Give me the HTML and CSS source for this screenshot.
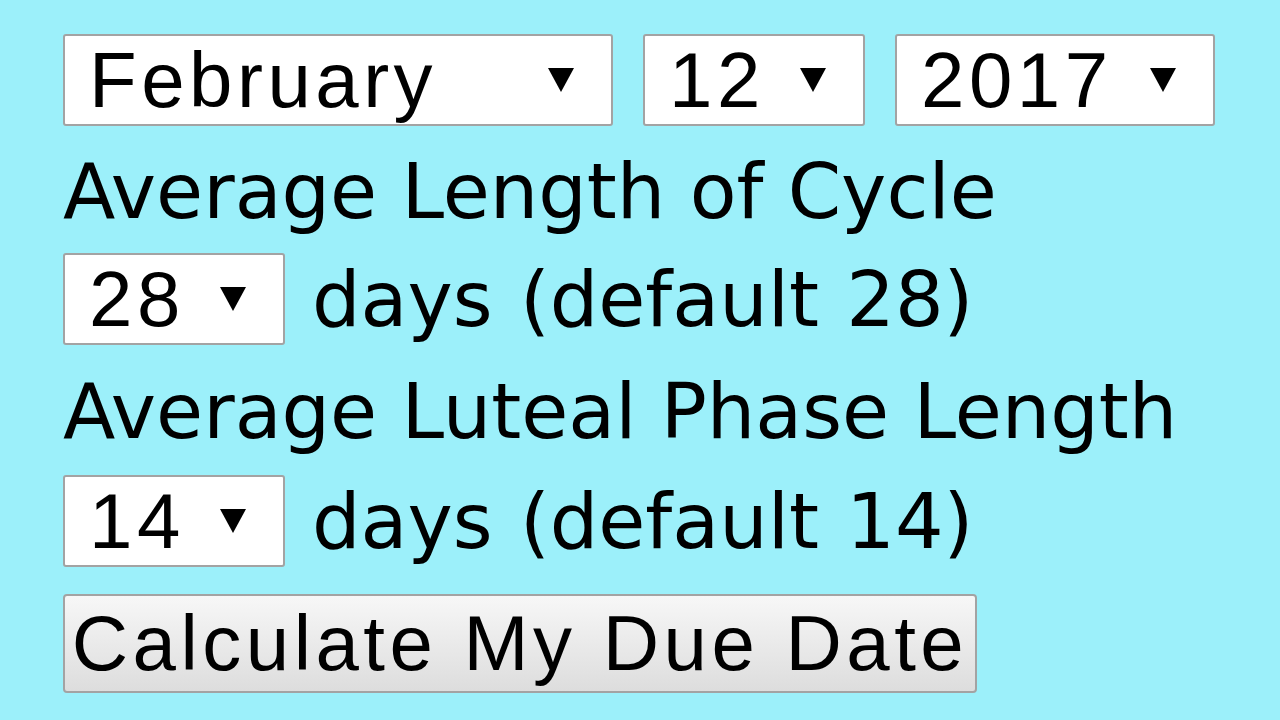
FILE: index.html
```html
<!DOCTYPE html>
<html lang="en">
<head>
  <meta charset="UTF-8">
  <meta name="viewport" content="width=device-width, initial-scale=1.0">
  <title>Due Date Calculator</title>
  <link rel="stylesheet" href="styles.css">
</head>
<body>
  <form class="due-form">
    <div class="date-row">
      <select class="picker picker-month">
        <option>January</option>
        <option selected>February</option>
        <option>March</option>
      </select>
      <select class="picker picker-small">
        <option>11</option>
        <option selected>12</option>
        <option>13</option>
      </select>
      <select class="picker picker-year">
        <option>2016</option>
        <option selected>2017</option>
        <option>2018</option>
      </select>
    </div>

    <div class="field-label label-cycle">Average Length of Cycle</div>
    <div class="choice-row row-cycle">
      <select class="picker picker-small">
        <option>27</option>
        <option selected>28</option>
        <option>29</option>
      </select>
      <span class="field-note">days (default 28)</span>
    </div>

    <div class="field-label label-luteal">Average Luteal Phase Length</div>
    <div class="choice-row row-luteal">
      <select class="picker picker-small">
        <option>13</option>
        <option selected>14</option>
        <option>15</option>
      </select>
      <span class="field-note">days (default 14)</span>
    </div>

    <button type="button" class="calc-button">Calculate My Due Date</button>
  </form>
</body>
</html>
```

FILE: styles.css
```css
/* Basic styling */
body {
  margin: 0;
  padding: 0;
  background-color: #9cf0fa; /* light cyan page */
  color: #000;
}

.due-form {
  padding: 34px 0 0 63px;
}

.date-row {
  display: flex;
  gap: 30px;
  margin-bottom: 20px;
}

.picker {
  -webkit-appearance: none;
  appearance: none;
  box-sizing: border-box;
  height: 92px;
  margin: 0;
  padding: 0 0 0 24px;
  font-family: "Liberation Sans", Arial, sans-serif;
  font-size: 78px;
  letter-spacing: 4.5px;
  color: #000;
  background-color: #fff;
  background-image: url("data:image/svg+xml,%3Csvg xmlns='http://www.w3.org/2000/svg' width='26' height='24'%3E%3Cpath d='M0 0H26L13 24Z'/%3E%3C/svg%3E");
  background-repeat: no-repeat;
  background-position: right 37px center;
  border: 2px solid #a3a3a3;
  border-radius: 3px;
}

.picker-month {
  width: 550px;
}

.picker-small {
  width: 222px;
}

.picker-year {
  width: 320px;
}

.field-label,
.field-note {
  font-family: "DejaVu Sans", Verdana, sans-serif;
  font-size: 76.5px;
  line-height: 91px;
}

.field-note {
  word-spacing: 3px;
}

.choice-row {
  display: flex;
  align-items: center;
  gap: 27px;
}

.row-cycle {
  margin-top: 16px;
  margin-bottom: 21px;
}

.row-luteal {
  margin-top: 18px;
}

.calc-button {
  box-sizing: border-box;
  display: block;
  width: 914px;
  height: 99px;
  margin-top: 27px;
  padding: 0;
  font-family: "Liberation Sans", Arial, sans-serif;
  font-size: 78px;
  letter-spacing: 4.5px;
  color: #000;
  background: linear-gradient(#f7f7f7, #dddddd);
  border: 2px solid #a3a3a3;
  border-radius: 4px;
  cursor: pointer;
}
```
